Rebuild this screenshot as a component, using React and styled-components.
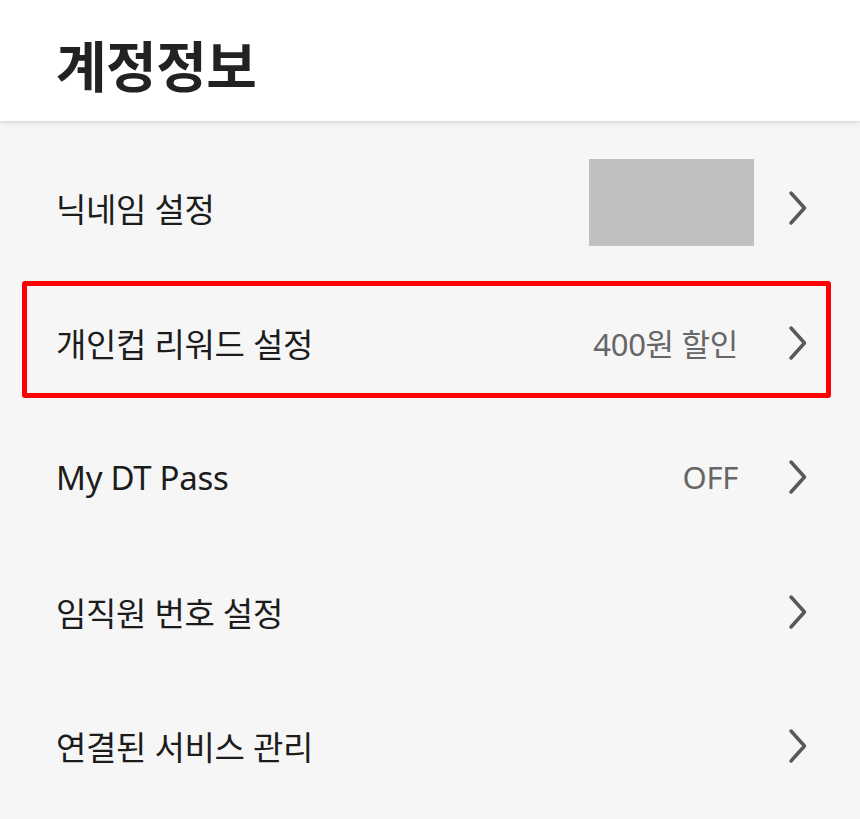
import React from 'react';
import styled, { createGlobalStyle } from 'styled-components';

const GlobalStyle = createGlobalStyle`
  html, body {
    margin: 0;
    padding: 0;
    background: #f6f6f6;
  }

  body {
    font-family: 'Noto Sans', 'Noto Sans CJK KR', sans-serif;
    -webkit-font-smoothing: antialiased;
  }
`;

const StyledPage = styled.div`
  min-height: 100vh;
  background: #f6f6f6;
`;

const StyledHeader = styled.header`
  position: relative;
  z-index: 1;
  display: flex;
  align-items: center;
  height: 121px;
  padding: 4px 56px 0;
  box-sizing: border-box;
  background: #fff;
  box-shadow: 0 1px 2px rgba(0, 0, 0, 0.1), 0 3px 8px rgba(0, 0, 0, 0.06);

  h1 {
    margin: 0;
    color: #222;
    font-family: 'Noto Sans CJK KR', sans-serif;
    font-size: 55px;
    font-weight: 700;
    letter-spacing: -0.5px;
  }
`;

const StyledList = styled.ul`
  list-style: none;
  margin: 0;
  padding: 20px 0 0;
`;

const StyledRow = styled.li`
  position: relative;
  display: flex;
  align-items: center;
  height: 134.5px;
  padding: 0 51px 0 56px;
  box-sizing: border-box;

  ${({ highlighted }) =>
    highlighted &&
    `
    &::after {
      content: '';
      position: absolute;
      top: 5px;
      bottom: 12px;
      left: 22px;
      right: 29px;
      border: 5px solid #ff0000;
      border-radius: 3px;
      pointer-events: none;
    }
  `}
`;

const StyledLabel = styled.span`
  flex: 1;
  color: #1c1c1c;
  font-size: 33px;
  letter-spacing: -0.3px;
`;

const StyledValue = styled.span`
  margin-right: 49px;
  color: #666;
  font-size: 31px;
  letter-spacing: -0.3px;
`;

const StyledPlaceholder = styled.div`
  width: 165px;
  height: 87px;
  margin: 0 33px 11px 0;
  background: #c0c0c0;
`;

const StyledChevron = styled.svg`
  flex: none;
  display: block;
`;

const Chevron = () => (
  <StyledChevron width="22" height="38" viewBox="0 0 22 38" fill="none">
    <path
      d="M4 4 L17.5 19 L4 34"
      stroke="#595959"
      strokeWidth="3.5"
      strokeLinecap="round"
      strokeLinejoin="round"
    />
  </StyledChevron>
);

const rows = [
  { label: '닉네임 설정', placeholder: true },
  { label: '개인컵 리워드 설정', value: '400원 할인', highlighted: true },
  { label: 'My DT Pass', value: 'OFF' },
  { label: '임직원 번호 설정' },
  { label: '연결된 서비스 관리' },
];

const App = () => (
  <StyledPage>
    <GlobalStyle />
    <StyledHeader>
      <h1>계정정보</h1>
    </StyledHeader>
    <StyledList>
      {rows.map(row => (
        <StyledRow key={row.label} highlighted={row.highlighted}>
          <StyledLabel>{row.label}</StyledLabel>
          {row.placeholder && <StyledPlaceholder />}
          {row.value && <StyledValue>{row.value}</StyledValue>}
          <Chevron />
        </StyledRow>
      ))}
    </StyledList>
  </StyledPage>
);

export default App;
